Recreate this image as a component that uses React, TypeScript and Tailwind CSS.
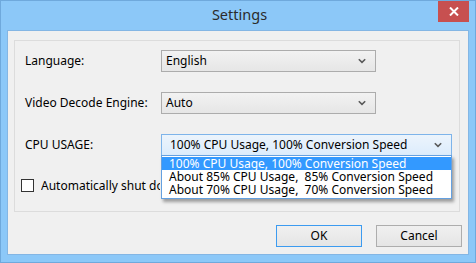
const font = { fontFamily: '"Noto Sans", "Open Sans", sans-serif' };

function Chevron() {
  return (
    <svg width="8" height="6" viewBox="0 0 8 6" className="shrink-0">
      <path d="M0.8 1.2 L4 4.4 L7.2 1.2" fill="none" stroke="#5a5a5a" strokeWidth="1.6" />
    </svg>
  );
}

function Select({ value, width, focused }: { value: string; width: string; focused?: boolean }) {
  return (
    <div
      className={`${width} h-[22px] flex items-center justify-between pr-[9px] border ${
        focused
          ? "border-[#7eb4ea] bg-gradient-to-b from-[#ecf4fc] to-[#dcecfc] pl-[8px]"
          : "border-[#acacac] bg-gradient-to-b from-[#f2f2f2] to-[#e6e6e6] pl-[4px]"
      }`}
    >
      <span className="text-[12px] text-black leading-none">{value}</span>
      <Chevron />
    </div>
  );
}

function Button({ label, active }: { label: string; active?: boolean }) {
  return (
    <div
      className={`w-[86px] h-[22px] flex items-center justify-center border text-[12px] text-black bg-gradient-to-b from-[#f0f0f0] to-[#e5e5e5] ${
        active ? "border-[#3c9bf0]" : "border-[#adadad]"
      }`}
    >
      {label}
    </div>
  );
}

export default function App() {
  return (
    <div
      style={font}
      className="w-[476px] h-[263px] bg-[#8cc8f8] border border-[#6fa9dc] flex flex-col relative overflow-hidden"
    >
      <div className="h-[29px] flex items-center justify-center shrink-0">
        <span className="text-[14.5px] text-[#2b2b2b] -mt-[2px] ml-[3px]">Settings</span>
      </div>
      <div className="absolute top-0 right-[6px] w-[31px] h-[21px] bg-[#c75050] flex items-center justify-center">
        <svg width="10" height="9" viewBox="0 0 10 9">
          <path d="M1 0.5 L9 8.5 M9 0.5 L1 8.5" stroke="#fff" strokeWidth="2" />
        </svg>
      </div>

      <div className="mx-[6px] mb-[7px] flex-1 bg-[#f0f0f0] border border-[#84b6e4] flex flex-col pl-[6px] pr-[6px] pt-[9px]">
        <div className="w-[446px] h-[172px] border border-[#dcdcdc] pl-[10px] pt-[9px] relative">
          <div className="flex items-center h-[22px]">
            <span className="w-[136px] text-[12px] text-black">Language:</span>
            <Select value="English" width="w-[215px]" />
          </div>
          <div className="flex items-center h-[22px] mt-[20px]">
            <span className="w-[136px] text-[12px] text-black">Video Decode Engine:</span>
            <Select value="Auto" width="w-[215px]" />
          </div>
          <div className="flex items-center h-[22px] mt-[20px] relative">
            <span className="w-[136px] text-[12px] text-black">CPU USAGE:</span>
            <Select value="100% CPU Usage, 100% Conversion Speed" width="w-[291px]" focused />
          </div>
          <div className="flex items-center h-[15px] mt-[22px] -ml-[4px] gap-[7px]">
            <div className="w-[13px] h-[13px] border border-[#333] bg-white shrink-0" />
            <span className="w-[119px] overflow-hidden text-[12px] text-black whitespace-nowrap">
              Automatically shut down the computer after conversion
            </span>
          </div>

          <div className="absolute left-[146px] top-[114px] w-[291px] h-[44px] bg-white border border-[#64a0e0] shadow-[2px_3px_3px_rgba(0,0,0,0.35)] flex flex-col py-[1px] text-[12px]">
            <div className="h-[14px] bg-[#3399ff] text-white pl-[7px] flex items-center leading-none">
              100% CPU Usage, 100% Conversion Speed
            </div>
            <div className="h-[14px] text-black pl-[7px] flex items-center leading-none whitespace-pre">
              About 85% CPU Usage,  85% Conversion Speed
            </div>
            <div className="h-[14px] text-black pl-[7px] flex items-center leading-none whitespace-pre">
              About 70% CPU Usage,  70% Conversion Speed
            </div>
          </div>
        </div>

        <div className="flex justify-end gap-[14px] mt-[13px]">
          <Button label="OK" active />
          <Button label="Cancel" />
        </div>
      </div>
    </div>
  );
}
